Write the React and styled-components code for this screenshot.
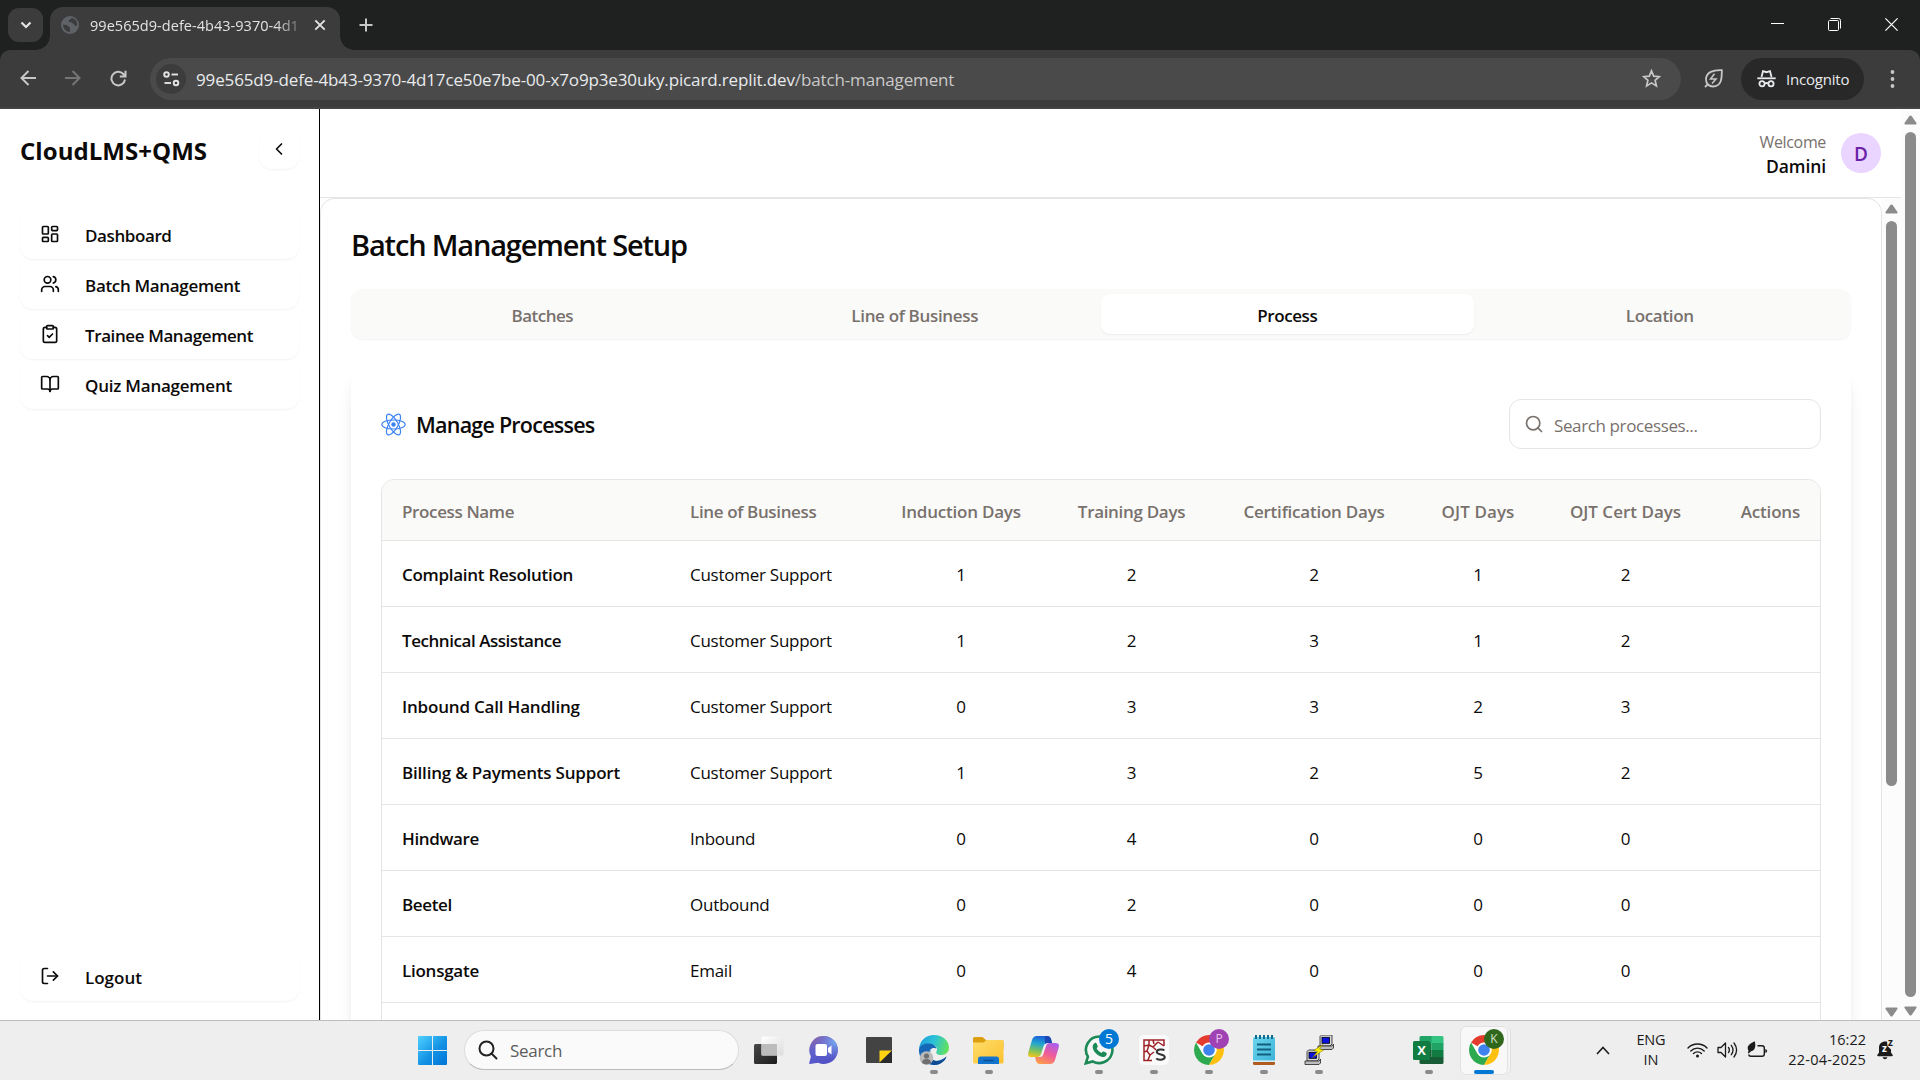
import React from 'react';
import styled, { createGlobalStyle, css } from 'styled-components';
import { LayoutDashboard, Users, ClipboardCheck, BookOpen, LogOut, ChevronLeft, Search } from 'lucide-react';

const GlobalStyle = createGlobalStyle`
  * { box-sizing: border-box; }
  html, body, #root { margin: 0; width: 1920px; height: 1080px; overflow: hidden; }
  body { background: #fff; font-family: "Open Sans", "Noto Sans", sans-serif; color: #0c0a09; }
  svg { display: block; flex: none; }
`;

const Screen = styled.div`
  display: flex;
  flex-direction: column;
  width: 1920px;
  height: 1080px;
`;

const Text = styled.span`
  white-space: nowrap;
  letter-spacing: ${(p) => p.$ls || 0}px;
`;

/* ---------- browser frame ---------- */

const TabStrip = styled.div`
  height: 50px;
  flex: none;
  display: flex;
  align-items: center;
  padding-left: 8px;
  background: #1f2120;
`;

const TabSearchButton = styled.div`
  width: 35px;
  height: 34px;
  border-radius: 11px;
  background: #3c3c3c;
  display: grid;
  place-items: center;
`;

const BrowserTab = styled.div`
  position: relative;
  align-self: flex-end;
  width: 290px;
  height: 43px;
  margin-left: 7px;
  padding: 0 14px 7px 11px;
  display: flex;
  align-items: center;
  background: #3c3c3c;
  border-radius: 13px 13px 0 0;

  &::before, &::after {
    content: "";
    position: absolute;
    bottom: 0;
    width: 14px;
    height: 14px;
  }
  &::before { right: 100%; background: radial-gradient(circle at 0 0, transparent 13.5px, #3c3c3c 14px); }
  &::after { left: 100%; background: radial-gradient(circle at 100% 0, transparent 13.5px, #3c3c3c 14px); }
`;

const TabTitle = styled.div`
  flex: 1;
  margin: 1px 13px 0 11px;
  overflow: hidden;
  white-space: nowrap;
  font-size: 14.5px;
  line-height: 22px;
  letter-spacing: 0.04px;
  color: #e3e3e3;
  mask-image: linear-gradient(90deg, #000 88%, transparent 103%);
`;

const NewTab = styled.div`
  width: 51px;
  display: grid;
  place-items: center;
`;

const WindowControls = styled.div`
  margin-left: auto;
  display: flex;
  align-items: center;
  height: 50px;
  padding-bottom: 1px;
`;

const WindowButton = styled.div`
  width: 57px;
  display: grid;
  place-items: center;
`;

const ToolbarBack = styled.div`
  height: 59px;
  flex: none;
  background: #1f2120;
`;

const Toolbar = styled.div`
  height: 59px;
  display: flex;
  align-items: center;
  padding: 0 17px 0 20px;
  background: #3c3c3c;
  border-bottom: 2px solid #464546;
  border-radius: 10px 10px 0 0;
`;

const NavButtons = styled.div`
  display: flex;
  gap: 29px;
  width: 130px;
`;

const AddressBar = styled.div`
  width: 1531px;
  height: 42px;
  border-radius: 21px;
  background: #4a4a4a;
  display: flex;
  align-items: center;
  padding: 0 20px 0 6px;
`;

const SiteInfo = styled.div`
  width: 30px;
  height: 30px;
  border-radius: 50%;
  background: #3c3c3c;
  display: grid;
  place-items: center;
`;

const Url = styled.div`
  flex: 1;
  padding: 2px 0 0 10px;
  font-size: 17px;
  line-height: 24px;
  letter-spacing: -0.14px;
  white-space: nowrap;
  color: #e8eaed;
  span { color: #c9c9c9; }
`;

const LeafButton = styled.div`
  width: 60px;
  padding-left: 23px;
`;

const IncognitoChip = styled.div`
  width: 123px;
  height: 42px;
  border-radius: 21px;
  background: #282828;
  display: flex;
  align-items: center;
  gap: 10px;
  padding-left: 16px;
  font-size: 15px;
  color: #e8eaed;
`;

const MenuDots = styled.div`
  margin-left: auto;
  width: 20px;
`;

/* ---------- page ---------- */

const Page = styled.div`
  height: 911px;
  flex: none;
  display: flex;
  overflow: hidden;
`;

const Sidebar = styled.aside`
  width: 320px;
  flex: none;
  display: flex;
  flex-direction: column;
  padding: 20px 20px 19px;
  border-right: 1px solid #000;
`;

const Brand = styled.div`
  display: flex;
  align-items: center;
  justify-content: space-between;
  height: 40px;
  margin-bottom: 40px;
  font-size: 24px;
  font-weight: 700;
`;

const BrandName = styled(Text)`
  padding-top: 2px;
`;

const faintRaise = css`
  border-radius: 13px;
  box-shadow: 0 1px 2px rgba(0, 0, 0, 0.05);
`;

const CollapseButton = styled.div`
  ${faintRaise}
  width: 40px;
  height: 40px;
  display: grid;
  place-items: center;
`;

const NavItem = styled.div`
  ${faintRaise}
  height: 50px;
  flex: none;
  display: flex;
  align-items: center;
  gap: 25px;
  padding-left: 20px;
  font-size: 17px;
  font-weight: 600;
  margin-top: ${(p) => (p.$last ? 'auto' : '0')};
  ${Text} { padding-top: 2px; }
`;

const Main = styled.main`
  flex: 1;
  display: flex;
  flex-direction: column;
  min-width: 0;
`;

const Header = styled.header`
  height: 89px;
  flex: none;
  display: flex;
  align-items: center;
  justify-content: flex-end;
  gap: 15px;
  padding-right: 20px;
  border-bottom: 1px solid #e5e5e5;
`;

const Greeting = styled.div`
  display: flex;
  flex-direction: column;
  align-items: flex-end;
  padding-top: 3px;
`;

const Welcome = styled(Text)`
  font-size: 16px;
  line-height: 24px;
  color: #78716c;
`;

const UserName = styled(Text)`
  font-size: 17.5px;
  line-height: 25px;
  font-weight: 600;
`;

const Avatar = styled.div`
  width: 40px;
  height: 40px;
  border-radius: 50%;
  background: #e9d5ff;
  color: #6b21a8;
  display: grid;
  place-items: center;
  font-size: 19px;
  font-weight: 600;
  line-height: 1;
  padding-top: 2px;
`;

const ScrollArea = styled.div`
  flex: 1;
  display: flex;
  min-height: 0;
`;

const Content = styled.section`
  flex: 1;
  min-width: 0;
  overflow: hidden;
  padding: 28px 30px 0;
  border: 1px solid #e5e5e5;
  border-bottom: 0;
  border-radius: 15px 15px 0 0;
`;

const PageTitle = styled.h1`
  margin: 0 0 26px;
  font-size: 29px;
  line-height: 36px;
  font-weight: 600;
  white-space: nowrap;
  letter-spacing: -1.17px;
`;

const TabList = styled.div`
  height: 50px;
  display: grid;
  grid-template-columns: repeat(4, 1fr);
  padding: 5px;
  margin-bottom: 30px;
  background: #fafaf9;
  border-radius: 12px;
  box-shadow: 0 1px 2px rgba(0, 0, 0, 0.05);
`;

const TabItem = styled.div`
  display: flex;
  align-items: center;
  justify-content: center;
  padding-top: 2px;
  border-radius: 9px;
  font-size: 17px;
  font-weight: 600;
  color: ${(p) => (p.$active ? '#0c0a09' : '#78716c')};
  background: ${(p) => (p.$active ? '#fff' : 'transparent')};
  box-shadow: ${(p) => (p.$active ? '0 1px 2px rgba(0,0,0,.06)' : 'none')};
`;

const Card = styled.div`
  height: 900px;
  padding: 30px;
  border-radius: 13px;
  box-shadow: 0 12px 18px -4px rgba(0, 0, 0, 0.1), 0 5px 8px -5px rgba(0, 0, 0, 0.1);
`;

const CardHeader = styled.div`
  display: flex;
  align-items: center;
  height: 50px;
  margin-bottom: 30px;
`;

const CardTitle = styled.h2`
  margin: 0 auto 0 10px;
  font-size: 21.5px;
  line-height: 28px;
  font-weight: 600;
  letter-spacing: -0.77px;
  white-space: nowrap;
  padding-top: 2px;
`;

const SearchBox = styled.div`
  width: 312px;
  height: 50px;
  display: flex;
  align-items: center;
  gap: 10px;
  padding-left: 14px;
  border: 1px solid #e5e5e5;
  border-radius: 12px;
  font-size: 17px;
  color: #78716c;
  ${Text} { padding-top: 2px; }
`;

const Table = styled.div`
  height: 800px;
  border: 1px solid #e5e5e5;
  border-radius: 13px;
  overflow: hidden;
`;

const Row = styled.div`
  display: grid;
  grid-template-columns: 288px 205px 172px 169px 196px 132px 163px 113px;
  height: ${(p) => (p.$head ? 61 : 66)}px;
  align-items: center;
  font-size: 17px;
  border-bottom: 1px solid #e5e5e5;
  color: ${(p) => (p.$head ? '#78716c' : '#0c0a09')};
  background: ${(p) => (p.$head ? '#fafaf9' : 'transparent')};
  font-weight: ${(p) => (p.$head ? 600 : 400)};
`;

const Cell = styled.div`
  padding: 2px 20px 0;
  white-space: nowrap;
  text-align: ${(p) => p.$align || 'left'};
  font-weight: ${(p) => (p.$strong ? 600 : 'inherit')};
`;

const Track = styled.div`
  width: 19px;
  flex: none;
  display: flex;
  flex-direction: column;
  align-items: center;
  background: #fcfcfc;
  padding: ${(p) => p.$pad};
`;

const Thumb = styled.div`
  width: 11px;
  height: ${(p) => p.$h}px;
  margin: 7px 0 auto;
  border-radius: 6px;
  background: #8b8b8b;
`;

/* ---------- taskbar ---------- */

const Taskbar = styled.footer`
  height: 60px;
  flex: none;
  display: flex;
  align-items: center;
  padding: 0 25px 1px 418px;
  background: #eeeeee;
  border-top: 1px solid #bdbdbd;
`;

const TaskSearch = styled.div`
  width: 275px;
  height: 40px;
  margin: 0 2px 0 17px;
  display: flex;
  align-items: center;
  gap: 12px;
  padding-left: 13px;
  border-radius: 20px;
  background: #fafafa;
  border: 1px solid #dcdcdc;
  border-bottom-color: #bcbcbc;
  font-size: 17px;
  color: #5c5c5c;
  ${Text} { padding-top: 1px; }
`;

const AppSlot = styled.div`
  position: relative;
  width: 55px;
  height: 58px;
  flex: none;
  display: grid;
  place-items: center;
`;

const ActiveSlot = styled.div`
  width: 48px;
  height: 49px;
  border-radius: 6px;
  background: #f8f8f8;
  border: 1px solid #e2e2e2;
  box-shadow: 3px 0 0 -1px #f4f4f4, 4px 0 0 -1px #dfdfdf;
  display: grid;
  place-items: center;
`;

const Indicator = styled.div`
  position: absolute;
  bottom: 5px;
  left: 50%;
  transform: translateX(-50%);
  width: ${(p) => (p.$active ? 20 : 8)}px;
  height: 4px;
  border-radius: 2px;
  background: ${(p) => (p.$active ? '#0078d4' : '#8a8a8a')};
`;

const Badge = styled.div`
  position: absolute;
  left: 28px;
  top: 8px;
  width: 20px;
  height: 20px;
  border-radius: 50%;
  background: ${(p) => p.$bg};
  color: ${(p) => p.$fg || '#fff'};
  font-size: ${(p) => p.$size || 12}px;
  line-height: 20px;
  text-align: center;
`;

const Tray = styled.div`
  margin-left: auto;
  display: flex;
  align-items: center;
  color: #1b1b1b;
  font-size: 14.5px;
  line-height: 20px;
`;

const Stack = styled.div`
  display: flex;
  flex-direction: column;
  align-items: ${(p) => p.$align};
  margin: 0 ${(p) => p.$right}px 0 ${(p) => p.$left}px;
`;

const TrayIcons = styled.div`
  display: flex;
  align-items: center;
  gap: 9px;
  margin-right: 20px;
`;

/* ---------- drawings ---------- */

const Arrow = ({ down }) => (
  <svg width="13" height="10" viewBox="0 0 13 10">
    <path d={down ? 'M1 0.5h11q1 0.6 .3 1.7L7.6 9q-1.1 1.2-2.2 0L.7 2.2Q0 1.1 1 .5z' : 'M1 9.5h11q1-.6 .3-1.7L7.6 1q-1.1-1.2-2.2 0L.7 7.8Q0 8.9 1 9.5z'} fill="#8b8b8b" />
  </svg>
);

const ReactMark = () => (
  <svg width="25" height="25" viewBox="-12.5 -12.5 25 25" fill="none" stroke="#3b82f6" strokeWidth="1.15">
    <circle r="2.2" fill="#3b82f6" stroke="none" />
    {[0, 60, 120].map((a) => <ellipse key={a} rx="11.7" ry="4.5" transform={`rotate(${a})`} />)}
  </svg>
);

const Globe = () => (
  <svg width="18" height="18" viewBox="0 0 18 18">
    <circle cx="9" cy="9" r="9" fill="#5f6368" />
    <path d="M2 8.5c2 .3 4.200.3 4.800 1.500.5 1.100 2.200.6 2.200 2.200v3.900a7.200 7.200 0 0 1-7-7.600zM11 2.100c-.8 1.300-2.700 1.200-3.200 2.500-.4 1.300.8 1.700 1.900 1.500 1.200-.2 1.300 1.200 2.500 1.600 1.300.4 1.300 2.400 3 2.200l.9-.2A7.200 7.200 0 0 0 11 2.100z" fill="#3c3c3c" />
  </svg>
);

const ChromeMark = () => (
  <svg width="30" height="30" viewBox="0 0 30 30">
    <circle cx="15" cy="15" r="15" fill="#fff" />
    <path d="M15 15 2.010 7.500A15 15 0 0 1 27.990 7.500H15z" fill="#e33b2e" />
    <path d="M2.010 7.500A15 15 0 0 0 15 30l6.500-11.250L15 15 8.500 18.750z" fill="#2da94f" />
    <path d="M27.990 7.500A15 15 0 0 1 15 30l6.500-11.250A7.500 7.500 0 0 0 15 7.500z" fill="#fdc010" />
    <circle cx="15" cy="15" r="7.5" fill="#fff" />
    <circle cx="15" cy="15" r="5.8" fill="#3f82ee" />
  </svg>
);

const WindowsMark = () => (
  <svg width="29" height="29" viewBox="0 0 29 29">
    <defs>
      <linearGradient id="win" x1="0" y1="0" x2="1" y2="1"><stop stopColor="#4fd1ff" /><stop offset=".55" stopColor="#1392e4" /><stop offset="1" stopColor="#0074d6" /></linearGradient>
    </defs>
    <path d="M1 0h13v14H0V1q0-1 1-1zM15 0h13q1 0 1 1v13H15zM0 15h14v14H1q-1 0-1-1zM15 15h14v13q0 1-1 1H15z" fill="url(#win)" />
  </svg>
);

const TaskView = () => (
  <svg width="30" height="28" viewBox="0 0 30 28">
    <defs>
      <linearGradient id="tv" x1="0" y1="0" x2="1" y2="1"><stop stopColor="#484848" /><stop offset="1" stopColor="#1c1c1c" /></linearGradient>
      <linearGradient id="tv2" x1="0" y1="0" x2="1" y2="1"><stop stopColor="#fff" /><stop offset="1" stopColor="#dcdcdc" /></linearGradient>
    </defs>
    <rect x="0" y="8" width="23" height="20" rx="1.5" fill="url(#tv)" />
    <rect x="7.5" y=".5" width="22" height="19" rx="1.5" fill="url(#tv2)" />
    <rect x="7.5" y="8" width="15.5" height="11.5" fill="#bcbcbc" />
  </svg>
);

const TeamsChat = () => (
  <svg width="29" height="28" viewBox="0 0 29 28">
    <defs>
      <linearGradient id="tc" x1="0.1" y1="0" x2=".5" y2="1"><stop stopColor="#9066a8" /><stop offset=".5" stopColor="#5f62cf" /><stop offset="1" stopColor="#5050c4" /></linearGradient>
      <radialGradient id="tc2" cx=".9" cy=".2" r=".7"><stop stopColor="#7aaaf0" /><stop offset="1" stopColor="#6a78d8" stopOpacity="0" /></radialGradient>
    </defs>
    <path d="M15 0a14 14 0 1 1-6 26.700L1 28q-1 0-.8-1l1.700-6.500A14 14 0 0 1 15 0z" fill="url(#tc)" />
    <path d="M15 0a14 14 0 1 1-6 26.700L1 28q-1 0-.8-1l1.700-6.500A14 14 0 0 1 15 0z" fill="url(#tc2)" />
    <rect x="6.5" y="8" width="11.5" height="12" rx="2" fill="#fff" />
    <path d="M19 12l3.500-2.500v9L19 16z" fill="#fff" />
  </svg>
);

const StickyNotes = () => (
  <svg width="26" height="26" viewBox="0 0 26 26">
    <rect width="26" height="26" rx="1" fill="#434343" />
    <path d="M13.500 25.500V13.500H26L13.500 25.500z" fill="#ffd30f" />
    <path d="M26 13.500V26H13.500z" fill="#2b2b2b" />
  </svg>
);

const EdgeMark = () => (
  <svg width="30" height="30" viewBox="0 0 30 30">
    <defs>
      <linearGradient id="ed" x1="0" y1=".3" x2="1" y2=".5"><stop stopColor="#1f9fdc" /><stop offset=".5" stopColor="#2cc3d6" /><stop offset="1" stopColor="#63e25b" /></linearGradient>
    </defs>
    <path d="M0 14C1 5 7 0 15 0c9 0 15 6 15 12.500 0 4.500-3 7.500-7.500 7.500-4 0-6-1.500-5-3.500 1.800-3.500-1-6.500-5.500-6.500C6 10 1 12 0 14z" fill="url(#ed)" />
    <path d="M0 14c1-3.500 5.500-6 10-5.500 4 .4 7 2.500 7.400 5-3-1.600-7.400.4-7.400 5C10 24 14.500 27 20 25.500c3.300-.9 5.500-2.300 7.500-4C25.500 27 20.500 30 15 30 6.500 30-.8 23.500 0 14z" fill="#1667b7" />
    <path d="M12.500 15c-4 3.500-1.500 11.500 6.500 11 3.700-.2 6.500-2.500 8.500-4.500C25.500 27 20.500 30 15 30 9.500 29 6.500 18 12.500 15z" fill="#0e4b93" />
    <circle cx="7.5" cy="23" r="6.8" fill="#b9b9b9" />
    <circle cx="7.5" cy="21" r="2.6" fill="#6f6f6f" />
    <path d="M3 28q0-4 4.500-4t4.500 4q-4.500 2.800-9 0z" fill="#6f6f6f" />
  </svg>
);

const Folder = () => (
  <svg width="31" height="27" viewBox="0 0 31 27">
    <defs><linearGradient id="fo" x1="0" y1="0" x2="1" y2="1"><stop stopColor="#ffdd6c" /><stop offset="1" stopColor="#fbc12f" /></linearGradient></defs>
    <path d="M0 1.500Q0 0 1.500 0h8l3.500 3H29q1.500 0 1.500 1.500V12H0z" fill="#dd9f10" />
    <path d="M0 5.500h10.500L13.500 3H29q1.500 0 1.500 1.500V25q0 1.500-1.500 1.500H1.500Q0 26.500 0 25z" fill="url(#fo)" />
    <path d="M5 27v-5q0-2.500 2.500-2.500h16Q26 19.500 26 22v5z" fill="#1475cc" />
    <path d="M10.500 23.500h10" stroke="#0a4f96" strokeWidth="1.5" />
  </svg>
);

const Copilot = () => (
  <svg width="31" height="28" viewBox="0 0 31 28">
    <defs>
      <linearGradient id="cp1" x1=".4" y1="0" x2=".2" y2="1"><stop stopColor="#1a63d8" /><stop offset=".35" stopColor="#22a6cf" /><stop offset=".7" stopColor="#7fc35a" /><stop offset="1" stopColor="#f2c51c" /></linearGradient>
      <linearGradient id="cp2" x1=".8" y1="0" x2=".3" y2="1"><stop stopColor="#a95ff0" /><stop offset=".5" stopColor="#ee5a9a" /><stop offset="1" stopColor="#ff9a4c" /></linearGradient>
    </defs>
    <path d="M9 0h10q3 0 4 3l1 4h-5q-2.500 0-3.200 2.500L13 18q-.8 3-4 3H3.500Q-.8 21 .3 16.500L4 4Q5.200 0 9 0z" fill="url(#cp1)" />
    <path d="M22 28H12q-3 0-4-3l-1-4h5q2.500 0 3.200-2.500L18 10q.8-3 4-3h5.500Q31.800 7 30.700 11.500L27 24q-1.200 4-5 4z" fill="url(#cp2)" />
    <path d="M17 0h2q3 0 4 3l1 4h-4.500q-1.500 0-2.500 1z" fill="#1b48b4" />
  </svg>
);

const WhatsApp = () => (
  <svg width="30" height="30" viewBox="0 0 30 30">
    <path d="M15.300 1.500A13.300 13.300 0 0 0 3.900 21.700L1.800 28.300l6.800-1.900A13.300 13.300 0 1 0 15.300 1.500z" fill="#f6f6f6" stroke="#1c8a56" strokeWidth="2.6" />
    <path d="M10.700 8c.8-.6 1.500-.3 1.900.5l1.100 2.500c.3.800-.3 1.400-1.100 2.300 1.100 2.200 2.700 3.700 5 4.600.8-1 1.400-1.700 2.200-1.300l2.400 1.200c.9.500.6 1.700-.1 2.600-1.400 1.800-3.600 1.900-6 .9-3.300-1.400-5.700-4-7-7C8.100 11.600 8.900 9 10.700 8z" fill="#1c8a56" />
  </svg>
);

const Snagger = () => (
  <svg width="30" height="30" viewBox="0 0 30 30">
    <rect width="30" height="30" rx="5" fill="#fafafa" />
    <g fill="none" stroke="#9e2128" strokeWidth="1.5">
      <path d="M13 25.500H5V5h20v6M5 11l5-1 4 2 5-5M10 5v5l-2 6 3 4-2 5M5 17l3-1M14 5l1 4M19 7l6 4M14 12l3 3" />
      <path d="M11 20l4-3" />
    </g>
    <path d="M25.300 15.500c-1-1.300-7.500-1.700-7.500 1.500s8 1.700 8 5-7 3.300-8.500 1.300" fill="none" stroke="#333" strokeWidth="2" />
  </svg>
);

const Notepad = () => (
  <svg width="24" height="30" viewBox="0 0 24 30">
    <defs><linearGradient id="np" x1="0" y1="0" x2="1" y2="1"><stop stopColor="#6cd6ee" /><stop offset="1" stopColor="#3cb2d6" /></linearGradient></defs>
    <rect x="1" y="26" width="22" height="4" rx="1.5" fill="#b05a1e" />
    <rect x="1" y="2" width="22" height="25" rx="1.5" fill="url(#np)" />
    <path d="M1 25.500h22v1.300H1z" fill="#f4f8fa" />
    <path d="M4 0v4M8 0v4M12 0v4M16 0v4M20 0v4" stroke="#136c8c" strokeWidth="2" />
    <path d="M5 9.500h14M5 14.500h14M5 19.500h14" stroke="#13607e" strokeWidth="2" />
  </svg>
);

const Putty = () => (
  <svg width="30" height="30" viewBox="0 0 30 30">
    {[[14, 0], [1, 15]].map(([x, y]) => (
      <g key={x} transform={`translate(${x} ${y})`}>
        <path d="M2 1.500 3.500 0H14v9l-2 2H2z" fill="#d8d8d8" stroke="#222" strokeWidth=".8" />
        <rect x="4" y="2.3" width="7.5" height="6" fill="#0a12e0" stroke="#000" strokeWidth=".8" />
        <path d="M0 11h14l1.500-2v4l-1.500 1.500H0z" fill="#bdbdbd" stroke="#222" strokeWidth=".8" />
      </g>
    ))}
    <path d="M19 9.500 9.500 15.500l4 1-5 6 11-7.500-4-1z" fill="#fff200" stroke="#6b6500" strokeWidth=".5" />
  </svg>
);

const ExcelLetter = styled.div`
  position: absolute;
  left: 12px;
  top: 20px;
  width: 17px;
  height: 19px;
  border-radius: 1.5px;
  background: #107c41;
  color: #fff;
  font: 700 13px/19px "Open Sans", sans-serif;
  text-align: center;
`;

const ExcelBook = () => (
  <svg width="31" height="28" viewBox="0 0 31 28">
    <path d="M8 0h11v7H6.500V1.500Q6.500 0 8 0z" fill="#21a366" />
    <path d="M18.500 0h10.500q1.500 0 1.500 1.500V7h-12z" fill="#33c481" />
    <path d="M6.500 7h12v7h-12z" fill="#107c41" /><path d="M18.500 7h12v7h-12z" fill="#21a366" />
    <path d="M6.500 14h12v7h-12z" fill="#185c37" /><path d="M18.500 14h12v7h-12z" fill="#107c41" />
    <path d="M6.500 21h24v5.500q0 1.500-1.500 1.500H8q-1.500 0-1.500-1.500z" fill="#185c37" />
  </svg>
);

const Wifi = () => (
  <svg width="21" height="16" viewBox="0 0 21 16" fill="none" stroke="#1b1b1b" strokeWidth="1.4" strokeLinecap="round">
    <path d="M1 6a13.400 13.400 0 0 1 19 0M3.800 8.900a9.500 9.500 0 0 1 13.400 0M6.500 11.500a5.700 5.700 0 0 1 8 0" />
    <circle cx="10.5" cy="14" r="1.5" fill="#1b1b1b" stroke="none" />
  </svg>
);

const Speaker = () => (
  <svg width="21" height="18" viewBox="0 0 21 18" fill="none" stroke="#1b1b1b" strokeWidth="1.3" strokeLinecap="round" strokeLinejoin="round">
    <path d="M1 6.500v5h3L8.500 16V2L4 6.500z" />
    <path d="M11.500 6.500q1.800 2.500 0 5M14.300 4.300q3.400 4.700 0 9.400M17 2q5.200 7 0 14" />
  </svg>
);

const Battery = () => (
  <svg width="21" height="18" viewBox="0 0 21 18" fill="none" stroke="#1b1b1b" strokeWidth="1.4">
    <path d="M10.5 4.7H15q2.300 0 2.300 2.300v6q0 2.300-2.300 2.300H4q-2.200 0-2.200-1.800" />
    <path d="M18.3 8v4q1.900-.3 1.900-2t-1.900-2z" fill="#1b1b1b" stroke="none" />
    <path d="M7.800 .2C9 5 8.200 9.800 4 10.200L1.700 12.600 .9 12 1.500 9.500C-1 5.500 2.500 2.600 7.800 .2z" fill="#1b1b1b" stroke="none" />
  </svg>
);

const BellMark = styled.div`
  position: relative;
  width: 18px;
  height: 20px;
`;

const Zed = styled.span`
  position: absolute;
  left: ${(p) => p.$x}px;
  top: ${(p) => p.$y}px;
  font-size: ${(p) => p.$s}px;
  line-height: 1;
  font-weight: 700;
  color: ${(p) => p.$c};
`;

const Bell = () => (
  <BellMark>
    <svg width="18" height="20" viewBox="0 0 18 20">
      <path d="M10 1.500C5 .8 2 3.500 2 7.500v5L.3 15q-.4 1.300 1 1.300h13.400q1.400 0 1-1.300L14 12.500V9.500L10.500 6z" fill="#1b1b1b" />
      <path d="M5.500 17.300h5q-.7 2-2.500 2t-2.500-2z" fill="#1b1b1b" />
    </svg>
    <Zed $x={5} $y={3} $s={10} $c="#fff">z</Zed>
    <Zed $x={11} $y={-3} $s={10} $c="#1b1b1b">z</Zed>
  </BellMark>
);

/* ---------- data ---------- */

const nav = [
  [LayoutDashboard, 'Dashboard', -0.4],
  [Users, 'Batch Management', -0.33],
  [ClipboardCheck, 'Trainee Management', -0.4],
  [BookOpen, 'Quiz Management', -0.23],
];

const tabs = [['Batches', -0.5], ['Line of Business', -0.33], ['Process', -0.42], ['Location', -0.32]];

const columns = [
  ['Process Name', -0.37], ['Line of Business', -0.36], ['Induction Days', -0.22], ['Training Days', -0.32],
  ['Certification Days', -0.23], ['OJT Days', 0.1], ['OJT Cert Days', 0], ['Actions', -0.2],
];

const rows = [
  ['Complaint Resolution', -0.28, 'Customer Support', 1, 2, 2, 1, 2],
  ['Technical Assistance', -0.45, 'Customer Support', 1, 2, 3, 1, 2],
  ['Inbound Call Handling', -0.19, 'Customer Support', 0, 3, 3, 2, 3],
  ['Billing & Payments Support', -0.2, 'Customer Support', 1, 3, 2, 5, 2],
  ['Hindware', -0.35, 'Inbound', 0, 4, 0, 0, 0],
  ['Beetel', -0.35, 'Outbound', 0, 2, 0, 0, 0],
  ['Lionsgate', -0.25, 'Email', 0, 4, 0, 0, 0],
];

const align = (i) => (i < 2 ? 'left' : i === 7 ? 'right' : 'center');

const stroke = { fill: 'none', stroke: '#c7c7c7', strokeWidth: 2 };

function BrowserFrame() {
  return (
    <>
      <TabStrip>
        <TabSearchButton>
          <svg width="12" height="8" viewBox="0 0 12 8" fill="none" stroke="#e3e3e3" strokeWidth="2.2"><path d="M1.500 1.500 6 6l4.500-4.500" /></svg>
        </TabSearchButton>
        <BrowserTab>
          <Globe />
          <TabTitle>99e565d9-defe-4b43-9370-4d1</TabTitle>
          <svg width="12" height="12" viewBox="0 0 12 12" fill="none" stroke="#e3e3e3" strokeWidth="1.9"><path d="M1.300 1.300l9.400 9.400M10.700 1.300l-9.400 9.400" /></svg>
        </BrowserTab>
        <NewTab>
          <svg width="14" height="14" viewBox="0 0 14 14" {...stroke}><path d="M7 .5v13M.5 7h13" /></svg>
        </NewTab>
        <WindowControls>
          <WindowButton><svg width="13" height="13" viewBox="0 0 13 13"><path d="M0 5.500h13" stroke="#fff" strokeWidth="1" /></svg></WindowButton>
          <WindowButton>
            <svg width="13" height="13" viewBox="0 0 13 13" fill="none" stroke="#fff" strokeWidth="1">
              <rect x=".5" y="2.5" width="10" height="10" rx="1" /><path d="M2.500.5h8q2 0 2 2v8" />
            </svg>
          </WindowButton>
          <WindowButton><svg width="13" height="13" viewBox="0 0 13 13" stroke="#fff" strokeWidth="1.2"><path d="M.4.4l12.200 12.200M12.600.4.4 12.600" /></svg></WindowButton>
        </WindowControls>
      </TabStrip>
      <ToolbarBack>
        <Toolbar>
          <NavButtons>
            <svg width="16" height="16" viewBox="0 0 16 16" {...stroke}><path d="M16 8H2M8.500 1 1.500 8l7 7" /></svg>
            <svg width="16" height="16" viewBox="0 0 16 16" {...stroke} stroke="#757575"><path d="M0 8h14M7.500 1l7 7-7 7" /></svg>
            <svg width="17" height="17" viewBox="0 0 17 17" {...stroke}><path d="M15 9.500A6.800 6.800 0 1 1 13.300 4L15.500 6.200M15.500.8V6.600H9.800" /></svg>
          </NavButtons>
          <AddressBar>
            <SiteInfo>
              <svg width="17" height="16" viewBox="0 0 17 16" fill="none" stroke="#e3e3e3" strokeWidth="1.9">
                <circle cx="3.5" cy="3.5" r="2.3" /><path d="M8.500 3.500H15" /><circle cx="13" cy="12" r="2.3" /><path d="M1.500 12H8" />
              </svg>
            </SiteInfo>
            <Url>99e565d9-defe-4b43-9370-4d17ce50e7be-00-x7o9p3e30uky.picard.replit.dev<span>/batch-management</span></Url>
            <svg width="19" height="19" viewBox="0 0 19 19" fill="none" stroke="#c7c7c7" strokeWidth="1.7"><path d="M9.500 1.800l2.200 5.300 5.700.5-4.300 3.700 1.300 5.600-4.900-3-4.900 3 1.300-5.600L1.600 7.600l5.700-.5z" /></svg>
          </AddressBar>
          <LeafButton>
            <svg width="19" height="19" viewBox="0 0 19 19" fill="none" stroke="#c7c7c7" strokeWidth="1.8">
              <path d="M17.800 1.200C18 9 17.600 17.500 9 17.500 5 17.500 2 14.500 2 10.500 2 3 9.500.8 17.800 1.200zM1 18l3-3" />
              <path d="M10.500 4.800 6.500 10h5.500l-4 4.500" strokeWidth="1.5" />
            </svg>
          </LeafButton>
          <IncognitoChip>
            <svg width="19" height="18" viewBox="0 0 19 18" fill="none" stroke="#e8eaed" strokeWidth="1.8">
              <path d="M4.500 7 6 1.200l3.500 1 3.500-1L14.500 7" /><path d="M.3 8.300h18.400" />
              <circle cx="5" cy="13.8" r="2.6" /><circle cx="14" cy="13.8" r="2.6" /><path d="M7.600 13.500q1.900-1 3.800 0" />
            </svg>
            <Text $ls={-0.2}>Incognito</Text>
          </IncognitoChip>
          <MenuDots>
            <svg width="20" height="18" viewBox="0 0 20 18" fill="#c7c7c7"><circle cx="9.5" cy="2" r="1.9" /><circle cx="9.5" cy="9" r="1.9" /><circle cx="9.5" cy="16" r="1.9" /></svg>
          </MenuDots>
        </Toolbar>
      </ToolbarBack>
    </>
  );
}

function ProcessTable() {
  return (
    <Table>
      <Row $head>
        {columns.map(([label, ls], i) => <Cell key={label} $align={align(i)}><Text $ls={ls}>{label}</Text></Cell>)}
      </Row>
      {rows.map(([name, ls, lob, ...days]) => (
        <Row key={name}>
          <Cell $strong><Text $ls={ls}>{name}</Text></Cell>
          <Cell><Text $ls={-0.26}>{lob}</Text></Cell>
          {days.map((d, i) => <Cell key={i} $align="center">{d}</Cell>)}
        </Row>
      ))}
    </Table>
  );
}

function TaskbarStrip() {
  return (
    <Taskbar>
      <WindowsMark />
      <TaskSearch>
        <svg width="20" height="20" viewBox="0 0 20 20" fill="none" stroke="#222" strokeWidth="2" strokeLinecap="round"><circle cx="8.5" cy="8.5" r="7" /><path d="M13.500 13.500l5 5" /></svg>
        <Text $ls={-0.3}>Search</Text>
      </TaskSearch>
      <AppSlot><TaskView /></AppSlot>
      <AppSlot><TeamsChat /></AppSlot>
      <AppSlot><StickyNotes /></AppSlot>
      <AppSlot><EdgeMark /><Indicator /></AppSlot>
      <AppSlot><Folder /><Indicator /></AppSlot>
      <AppSlot><Copilot /></AppSlot>
      <AppSlot><WhatsApp /><Badge $bg="#0078d4" $size={14}>5</Badge><Indicator /></AppSlot>
      <AppSlot><Snagger /><Indicator /></AppSlot>
      <AppSlot><ChromeMark /><Badge $bg="#a142b4" $fg="#e6c4ec">P</Badge><Indicator /></AppSlot>
      <AppSlot><Notepad /><Indicator /></AppSlot>
      <AppSlot><Putty /><Indicator /></AppSlot>
      <AppSlot />
      <AppSlot><ExcelBook /><ExcelLetter>X</ExcelLetter><Indicator /></AppSlot>
      <AppSlot><ActiveSlot><ChromeMark /></ActiveSlot><Badge $bg="#2f671c" $fg="#cfe0c9">K</Badge><Indicator $active /></AppSlot>
      <Tray>
        <svg width="14" height="9" viewBox="0 0 14 9" fill="none" stroke="#1b1b1b" strokeWidth="1.6"><path d="M1 8l6-6.500L13 8" /></svg>
        <Stack $align="center" $left={26} $right={22}><Text $ls={-0.2}>ENG</Text><Text>IN</Text></Stack>
        <TrayIcons><Wifi /><Speaker /><Battery /></TrayIcons>
        <Stack $align="flex-end" $left={0} $right={11}><Text>16:22</Text><Text $ls={0.2}>22-04-2025</Text></Stack>
        <Bell />
      </Tray>
    </Taskbar>
  );
}

export default function App() {
  return (
    <Screen>
      <GlobalStyle />
      <BrowserFrame />
      <Page>
        <Sidebar>
          <Brand>
            <BrandName $ls={0.05}>CloudLMS+QMS</BrandName>
            <CollapseButton><ChevronLeft size={20} /></CollapseButton>
          </Brand>
          {nav.map(([Icon, label, ls]) => (
            <NavItem key={label}><Icon size={20} /><Text $ls={ls}>{label}</Text></NavItem>
          ))}
          <NavItem $last><LogOut size={20} /><Text>Logout</Text></NavItem>
        </Sidebar>
        <Main>
          <Header>
            <Greeting>
              <Welcome $ls={-0.35}>Welcome</Welcome>
              <UserName $ls={-0.1}>Damini</UserName>
            </Greeting>
            <Avatar>D</Avatar>
          </Header>
          <ScrollArea>
            <Content>
              <PageTitle>Batch Management Setup</PageTitle>
              <TabList>
                {tabs.map(([label, ls]) => (
                  <TabItem key={label} $active={label === 'Process'}><Text $ls={ls}>{label}</Text></TabItem>
                ))}
              </TabList>
              <Card>
                <CardHeader>
                  <ReactMark />
                  <CardTitle>Manage Processes</CardTitle>
                  <SearchBox><Search size={20} /><Text $ls={-0.38}>Search processes...</Text></SearchBox>
                </CardHeader>
                <ProcessTable />
              </Card>
            </Content>
            <Track $pad="6px 3px 3px">
              <Arrow /><Thumb $h={565} /><Arrow down />
            </Track>
          </ScrollArea>
        </Main>
        <Track $pad="6px 3px 4px">
          <Arrow /><Thumb $h={865} /><Arrow down />
        </Track>
      </Page>
      <TaskbarStrip />
    </Screen>
  );
}
